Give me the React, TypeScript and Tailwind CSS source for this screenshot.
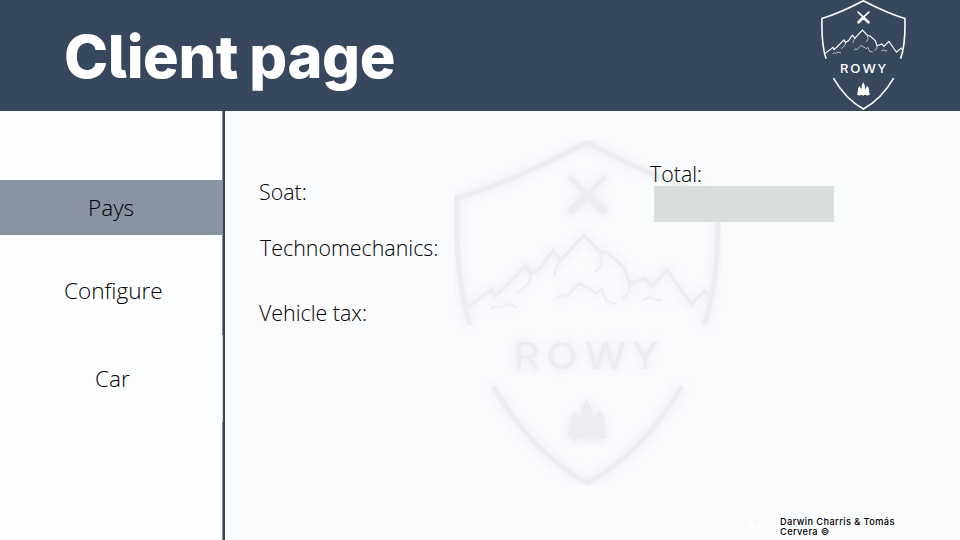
import React from "react";

const mountainLines = [
  "M530.7 273L529.3 283.3L516.7 293.3",
  "M560.7 260L557 266L554 276",
  "M600 252L601.7 265L595 272",
  "M630 284L629.3 292.3L621.7 299",
  "M490.7 308.7L496 306.3L499.3 307.7L509 304L516.7 307.3",
  "M557.3 298.3L563.3 293.3L566 296.7L579.3 283.3L596.7 293L601.7 289.3L606.7 301.7L616.7 303.7",
  "M643.3 300L650 297L658.3 301L662 299",
];

const letters = [
  { ch: "R", x: 513.5, w: 26.5 },
  { ch: "O", x: 546, w: 32 },
  { ch: "W", x: 584.5, w: 42 },
  { ch: "Y", x: 631.5, w: 27 },
];

function RowyLogo({ className }: { className: string }) {
  return (
    <svg viewBox="454 140 267 346" preserveAspectRatio="none" className={className} fill="none" stroke="currentColor" aria-hidden="true">
      <g strokeWidth="5" strokeLinejoin="miter">
        <path d="M470 325Q455 280 457 198Q512 182 587 142.5Q662 182 717.5 198Q720 280 704 325" />
        <path d="M493 386Q531 452 587 483Q644 452 682 386" />
      </g>
      <path
        strokeWidth="3.6"
        d="M468 307L491.7 289.3L495 296L505 287L525.7 265.7L530.7 273.3L540 268.3L552.7 250.7L560.7 260L584 235L600 251.7L607.3 252.7L624.3 267.7L630 284L645 278.3L651.7 286L667.3 270L691 304.3L705.3 291L709.3 296.7"
      />
      <g strokeWidth="2">
        {mountainLines.map((d) => (
          <path key={d} d={d} />
        ))}
      </g>
      <g strokeLinecap="round">
        <path strokeWidth="5" d="M570.5 178L587 194M604.5 178L587 194" />
        <path strokeWidth="8.5" d="M588 196L603 210M586 196L572 210" />
      </g>
      <path
        fill="currentColor"
        stroke="none"
        d="M586.7 398.5L592.5 409L590 409L593 415L591.5 416L593.5 421L599.3 409.3L605 418L603 419L606 426L604 427L607 434L605 434.5L608 438.5L601 438.5V441H597.5V438.5H588.5V441H585V438.5H576V441H572.5V438.5H566.5L569.5 434.5L567.5 434L570.5 427L569 426L571 419L570 418L575 410.5L580.5 420L583 415L580.5 415L583.5 409L581 409Z"
      />
      <g fill="currentColor" stroke="none" className="font-['Inter',sans-serif] text-[36.8px] font-medium">
        {letters.map((l) => (
          <text key={l.ch} x={l.x} y="369" textLength={l.w} lengthAdjust="spacingAndGlyphs">
            {l.ch}
          </text>
        ))}
      </g>
    </svg>
  );
}

export default function App() {
  return (
    <div className="flex h-[540px] w-[960px] flex-col overflow-hidden bg-[#fafbfd] font-['Open_Sans',sans-serif] text-black">
      <header className="flex h-[111px] shrink-0 items-start justify-between bg-[#37475e] pl-16 pr-[54px]">
        <h1 className="mt-[20px] whitespace-nowrap font-['Inter',sans-serif] text-[59.5px] leading-[72px] font-extrabold tracking-[-0.4px] text-white [font-feature-settings:'cv05'] [word-spacing:-1.5px]">
          Client page
        </h1>
        <RowyLogo className="h-[110px] w-[85px] text-white" />
      </header>

      <div className="flex min-h-0 flex-1">
        <nav className="flex w-[222px] shrink-0 flex-col bg-[#fbfdff] pt-[69px] text-[22.6px] leading-[32px] font-light">
          <a className="flex h-[55px] items-center justify-center bg-[#8a93a2]">Pays</a>
          <a className="mt-[40px] pl-16">Configure</a>
          <a className="mt-[56px] pl-[95px]">Car</a>
        </nav>
        <div className="flex w-[3px] shrink-0">
          <div className="flex w-px flex-col">
            <div className="h-[224px] bg-[#7c899b]" />
            <div className="h-[87px] bg-[#d3d9df]" />
            <div className="flex-1 bg-[#7c899b]" />
          </div>
          <div className="flex-1 bg-[#37475e]" />
        </div>

        <main className="relative flex flex-1 flex-col">
          <div className="absolute top-[29px] left-[229px] h-[346px] w-[267px] overflow-hidden">
            <RowyLogo className="h-full w-full text-[#ecedf1] [filter:blur(0.5px)_drop-shadow(0_0_5px_#e9eaf0)]" />
          </div>
          <div className="relative flex flex-1 text-[21.4px] leading-[30px] font-light">
            <section className="w-[425px] pl-[34px] pt-[66px]">
              <p>Soat:</p>
              <p className="mt-[26px] pl-px">Technomechanics:</p>
              <p className="mt-[35px]">Vehicle tax:</p>
            </section>
            <section className="pt-[48px]">
              <p>Total:</p>
              <div className="mt-[-3px] ml-[4px] h-[36px] w-[180px] bg-[#d8dfdb]" />
            </section>
          </div>
          <footer className="relative flex h-[26px] pl-[522px]">
            <div className="flex h-4 w-5 items-center justify-center rounded-[2px] bg-[#fdfdfe]">
              <svg viewBox="0 0 6 6" className="h-1.5 w-1.5 fill-[#f8f9fb]">
                <path d="M0 0L6 3L0 6Z" />
              </svg>
            </div>
            <p className="mt-[3px] ml-[13px] w-[130px] font-['Inter',sans-serif] text-[9.2px] leading-[10px] font-medium tracking-[0.42px]">
              Darwin Charris &amp; Tomás
              <br />
              Cervera ©
            </p>
          </footer>
        </main>
      </div>
    </div>
  );
}
